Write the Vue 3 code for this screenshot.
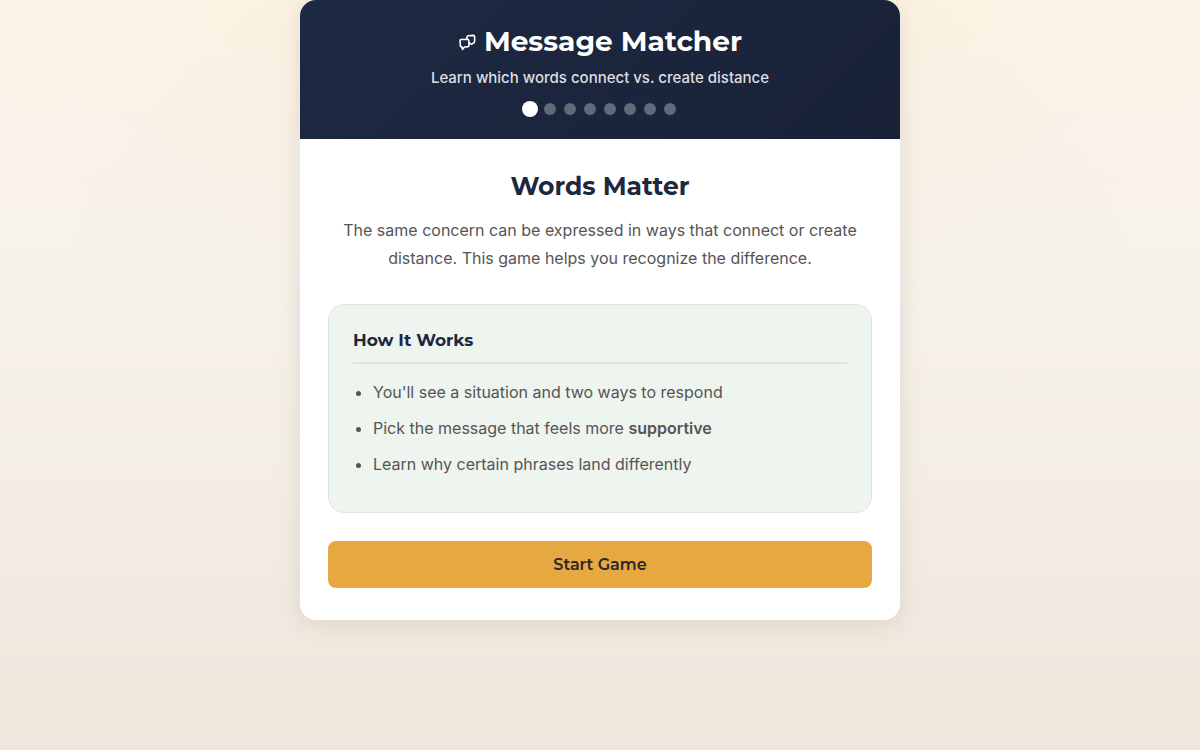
<script setup>
import { ref } from 'vue'

const steps = 8
const current = ref(0)
</script>

<template>
  <div class="page">
    <main class="card">
      <header class="head">
        <h1>
          <svg class="icon" viewBox="0 0 18 18" fill="none" stroke="currentColor" stroke-width="1.6" stroke-linejoin="round" stroke-linecap="round" aria-hidden="true">
            <path d="M3 6.5 9.5 6.3Q10.7 6.3 10.8 7.4L11 12.4Q11 13.4 10 13.6L6.6 14 4.4 16.4 4.1 14 3.4 13.9Q2.5 13.8 2.4 12.8L2 7.6Q2 6.6 3 6.5Z" />
            <path d="M8.9 5.8V4.2Q9 3.1 10 2.8L15.3 2.4Q16.5 2.4 16.6 3.5L16.6 8.6Q16.6 9.7 15.5 9.9L13.6 11.3 12.2 10.4H11.2" />
          </svg>
          <span>Message Matcher</span>
        </h1>
        <p class="sub">Learn which words connect vs. create distance</p>
        <div class="dots">
          <span v-for="n in steps" :key="n" class="dot" :class="{ active: n - 1 === current }"></span>
        </div>
      </header>
      <section class="body">
        <h2>Words Matter</h2>
        <p class="intro">The same concern can be expressed in ways that connect or create distance. This game helps you recognize the difference.</p>
        <div class="how">
          <h3>How It Works</h3>
          <ul>
            <li>You'll see a situation and two ways to respond</li>
            <li>Pick the message that feels more <strong>supportive</strong></li>
            <li>Learn why certain phrases land differently</li>
          </ul>
        </div>
        <button type="button" class="start">Start Game</button>
      </section>
    </main>
  </div>
</template>

<style>
body {
  margin: 0;
}
</style>

<style scoped>
.page {
  min-height: 100vh;
  box-sizing: border-box;
  font-family: Inter, "Liberation Sans", sans-serif;
  color: #555;
  background:
    radial-gradient(ellipse 60% 50% at 50% 0, rgba(225, 190, 100, 0.1), transparent),
    linear-gradient(180deg, #fdf5ea 0%, #f7f2ec 33%, #f3ede4 66%, #eee6db 100%);
}
.card {
  max-width: 600px;
  margin: 0 auto;
  background: #fff;
  border-radius: 16px;
  overflow: hidden;
  box-shadow: 0 4px 24px rgba(70, 65, 40, 0.12);
}
.head {
  padding: 24px;
  text-align: center;
  color: #fff;
  background: linear-gradient(135deg, #1e2a44 0%, #182136 100%);
}
h1, h2, h3, .start {
  font-family: Montserrat, Inter, "Liberation Sans", sans-serif;
}
h1 {
  display: flex;
  align-items: center;
  justify-content: center;
  gap: 8px;
  margin: 0 0 7px;
  font-size: 28px;
  line-height: 35px;
  font-weight: 700;
}
.icon {
  width: 18px;
  height: 18px;
}
.sub {
  margin: 0 0 13px;
  font-size: 15px;
  line-height: 24px;
  font-weight: 500;
  color: #dddfe3;
}
.dots {
  display: flex;
  justify-content: center;
  gap: 8px;
}
.dot {
  width: 12px;
  height: 12px;
  border-radius: 50%;
  background: #626979;
}
.dot.active {
  background: #fff;
  box-shadow: 0 0 0 2px #fff;
}
.body {
  padding: 32px 28px;
}
h2 {
  margin: 0 0 14px;
  text-align: center;
  font-size: 25px;
  line-height: 31px;
  font-weight: 700;
  color: #1c2740;
}
.intro {
  margin: 0 0 32px;
  text-align: center;
  font-size: 16px;
  line-height: 28px;
}
.how {
  margin-bottom: 28px;
  padding: 24px;
  border: 1px solid #d9e7dc;
  border-radius: 16px;
  background: #eef4ee;
}
h3 {
  margin: 0 0 14px;
  padding-bottom: 11px;
  border-bottom: 2px solid #d8e7dd;
  font-size: 17px;
  line-height: 22px;
  font-weight: 700;
  color: #1c2740;
}
ul {
  margin: 0;
  padding: 0 0 2px 20px;
}
li {
  margin-bottom: 8px;
  font-size: 16px;
  line-height: 28px;
}
strong {
  font-weight: 600;
}
.start {
  display: block;
  width: 100%;
  padding: 14px;
  border: 0;
  border-radius: 8px;
  background: #e6a840;
  color: #2a2530;
  font-size: 16px;
  line-height: 19px;
  font-weight: 600;
  cursor: pointer;
}
</style>
